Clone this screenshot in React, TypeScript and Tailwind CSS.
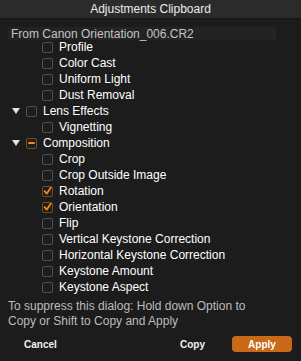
import type { ReactNode } from 'react';

type State = 'off' | 'on' | 'mixed';

type Item = { label: string; level: 0 | 1; state: State; open?: boolean };

const items: Item[] = [
  { label: 'Profile', level: 1, state: 'off' },
  { label: 'Color Cast', level: 1, state: 'off' },
  { label: 'Uniform Light', level: 1, state: 'off' },
  { label: 'Dust Removal', level: 1, state: 'off' },
  { label: 'Lens Effects', level: 0, state: 'off', open: true },
  { label: 'Vignetting', level: 1, state: 'off' },
  { label: 'Composition', level: 0, state: 'mixed', open: true },
  { label: 'Crop', level: 1, state: 'off' },
  { label: 'Crop Outside Image', level: 1, state: 'off' },
  { label: 'Rotation', level: 1, state: 'on' },
  { label: 'Orientation', level: 1, state: 'on' },
  { label: 'Flip', level: 1, state: 'off' },
  { label: 'Vertical Keystone Correction', level: 1, state: 'off' },
  { label: 'Horizontal Keystone Correction', level: 1, state: 'off' },
  { label: 'Keystone Amount', level: 1, state: 'off' },
  { label: 'Keystone Aspect', level: 1, state: 'off' },
];

function Checkbox({ state }: { state: State }) {
  const active = state !== 'off';
  return (
    <span
      className={
        'flex h-[11px] w-[11px] shrink-0 items-center justify-center rounded-[2px] border bg-[#1e1e1e] ' +
        (active ? 'border-[#7a4a1c]' : 'border-[#4f4f4f]')
      }
    >
      {state === 'on' && (
        <svg width="10" height="10" viewBox="0 0 10 10" className="-mt-[1px]">
          <path d="M1.8 5.2 L4.2 7.8 L8.6 1.4" fill="none" stroke="#f08a1e" strokeWidth="2" strokeLinecap="round" strokeLinejoin="round" />
        </svg>
      )}
      {state === 'mixed' && <span className="h-[2px] w-[7px] rounded-[1px] bg-[#f08a1e]" />}
    </span>
  );
}

function Row({ item }: { item: Item }) {
  return (
    <div className={'flex h-4 items-center ' + (item.level === 0 ? 'pl-[12px]' : 'pl-[42px]')}>
      {item.level === 0 && (
        <svg width="8" height="6" viewBox="0 0 8 6" className="mr-[6px] shrink-0">
          <polygon points="0,0 8,0 4,6" fill="#e0e0e0" />
        </svg>
      )}
      <Checkbox state={item.state} />
      <span className="ml-[6px] whitespace-nowrap text-[12px] text-white">{item.label}</span>
    </div>
  );
}

function TextButton({ children }: { children: ReactNode }) {
  return <button className="text-[10px] font-bold text-[#f0f0f0]">{children}</button>;
}

export default function App() {
  return (
    <div
      className="flex h-[361px] w-[301px] flex-col overflow-hidden bg-[#1c1c1c]"
      style={{ fontFamily: '"Liberation Sans", Arial, sans-serif' }}
    >
      {/* Title bar */}
      <div className="flex h-[19px] shrink-0 items-center justify-center border-b border-[#151515] bg-[#2b2b2b] text-[12px] text-[#ececec]">
        Adjustments Clipboard
      </div>

      {/* Source header */}
      <div className="relative z-10 mx-[8px] mt-[8px] flex h-[13px] w-[268px] items-center bg-[#232323] pl-[3px] text-[12px] text-[#c4c4c4]">
        From Canon Orientation_006.CR2
      </div>

      {/* Settings list */}
      <div className="-mt-[1px] flex flex-col">
        {items.map((item) => (
          <Row key={item.label} item={item} />
        ))}
      </div>

      {/* Hint */}
      <p className="mt-[4px] px-[8px] text-[12px] leading-[15px] text-[#bdbdbd]">
        To suppress this dialog: Hold down Option to
        <br />
        Copy or Shift to Copy and Apply
      </p>

      {/* Buttons */}
      <div className="mt-[7px] flex h-4 items-center pl-[24px] pr-[9px]">
        <TextButton>Cancel</TextButton>
        <div className="flex-1" />
        <TextButton>Copy</TextButton>
        <button className="ml-[27px] h-4 w-[60px] rounded-[4px] bg-[#c86a17] text-[10px] font-bold text-white">
          Apply
        </button>
      </div>
    </div>
  );
}
